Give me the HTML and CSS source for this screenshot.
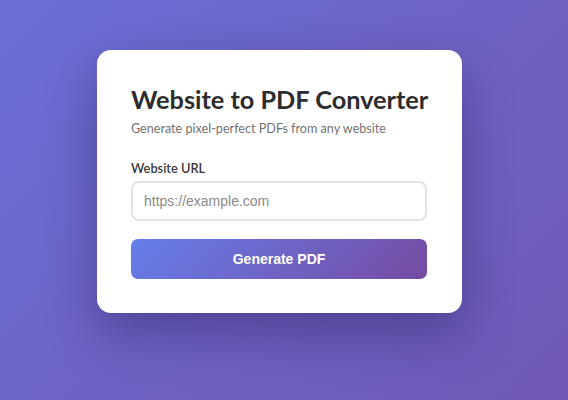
FILE: index.html
```html
<!DOCTYPE html>
<html>
<head>
<meta charset="utf-8">
<link rel="stylesheet" href="styles.css">
</head>
<body>
<div class="card">
  <h1 class="title">Website to PDF Converter</h1>
  <p class="subtitle">Generate pixel-perfect PDFs from any website</p>
  <label class="label" for="url">Website URL</label>
  <input class="input" id="url" type="text" placeholder="https://example.com">
  <button class="btn">Generate PDF</button>
</div>
</body>
</html>
```

FILE: styles.css
```css
html, body {
  margin: 0;
  height: 100%;
}
body {
  background: linear-gradient(135deg, #6b6fd6 0%, #7057b4 100%);
  font-family: Lato, sans-serif;
  display: flex;
  justify-content: center;
  align-items: flex-start;
  padding: 50px 9px 0 0;
  box-sizing: border-box;
}
.card {
  width: 365px;
  box-sizing: border-box;
  background: #fff;
  border-radius: 14px;
  padding: 34px 35px 34px 34px;
  box-shadow: 0 20px 50px rgba(40, 30, 90, 0.45);
  display: flex;
  flex-direction: column;
}
.title {
  margin: 0;
  font-size: 25.3px;
  line-height: 30px;
  font-weight: 700;
  color: #2d2d2d;
  white-space: nowrap;
}
.subtitle {
  margin: 6px 0 0;
  font-size: 12.6px;
  line-height: 18px;
  color: #727272;
  white-space: nowrap;
}
.label {
  margin-top: 21px;
  font-size: 12.8px;
  line-height: 18px;
  font-weight: 600;
  color: #3a3a3a;
}
.input {
  margin-top: 4px;
  height: 40px;
  box-sizing: border-box;
  border: 2px solid #e3e3e3;
  border-radius: 8px;
  padding: 0 11px;
  font-family: "Liberation Sans", Arial, sans-serif;
  font-size: 14px;
  color: #333;
  outline: none;
}
.input::placeholder {
  color: #8a8a8a;
}
.btn {
  margin-top: 18px;
  height: 40px;
  border: none;
  border-radius: 7px;
  background: linear-gradient(135deg, #667eea 0%, #764ba2 100%);
  color: #fff;
  font-family: "Liberation Sans", Arial, sans-serif;
  font-size: 14px;
  font-weight: 700;
  cursor: pointer;
}
```
